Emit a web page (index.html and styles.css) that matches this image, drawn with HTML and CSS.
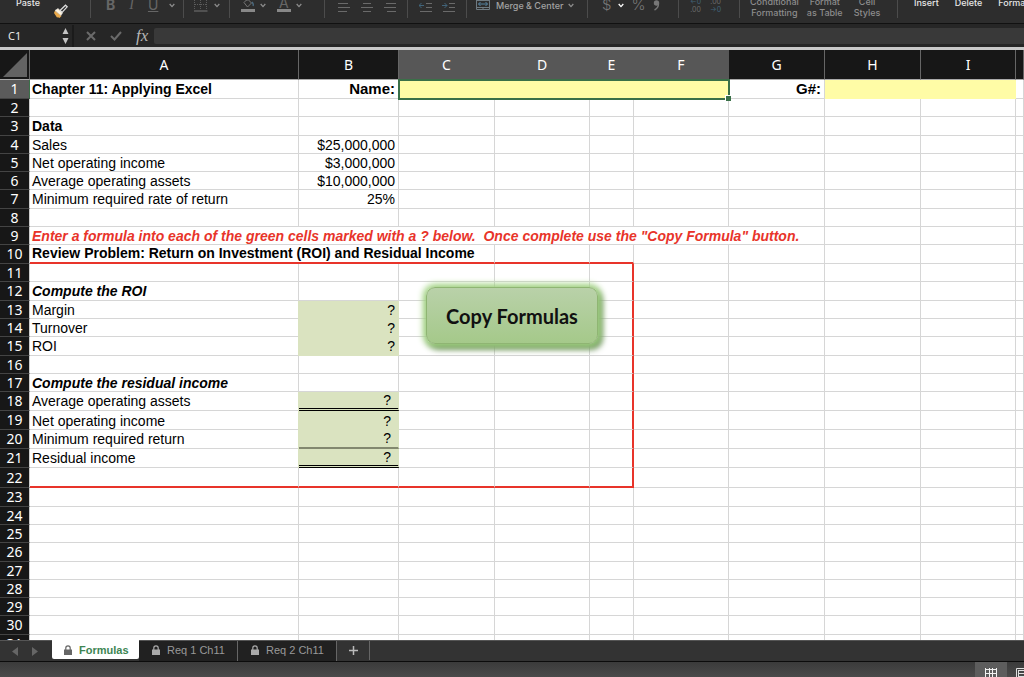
FILE: index.html
```html
<!DOCTYPE html>
<html lang="en">
<head>
<meta charset="utf-8">
<title>Chapter 11: Applying Excel</title>
<link rel="stylesheet" href="styles.css">
</head>
<body>
<svg class="defs" aria-hidden="true">
  <symbol id="chev" viewBox="0 0 6 5"><path d="M.7 1 3 3.6 5.3 1" fill="none" stroke="currentColor" stroke-width="1.3"/></symbol>
  <symbol id="lock" viewBox="0 0 8 10"><path d="M0 4.5h8V10H0z" fill="currentColor"/><path d="M1.8 5V3a2.2 2.2 0 0 1 4.4 0v2" fill="none" stroke="currentColor" stroke-width="1.2"/></symbol>
</svg>

<header class="ribbon">
  <div class="group g-paste">
    <button class="label one bright">Paste</button>
    <button class="ico" aria-label="Format painter"><svg width="16" height="16" viewBox="0 0 16 16"><path d="M2 8.500 8.500 14 6.500 16 5 15.200 4 15.500 1 11z" fill="#e9a94b"/><path d="M2 8.500 5 6.500 9.500 10.800 8 13.500z" fill="#fff3dc" stroke="#ddd" stroke-width=".6"/><path d="M7 8.500 12.500 3.200 14.200 4.800 9 10.300z" fill="none" stroke="#ddd" stroke-width="1.200"/></svg></button>
  </div>
  <div class="group g-style">
    <button class="glyph b">B</button>
    <button class="glyph i">I</button>
    <button class="glyph u">U</button>
    <button class="drop" aria-label="Underline options"><svg width="6" height="5"><use href="#chev"/></svg></button>
  </div>
  <div class="group g-border">
    <button class="ico" aria-label="Borders"><svg width="14" height="14" viewBox="0 0 14 14" fill="none" stroke="#5c5c5c"><path d="M.5 0v12M6.500 0v12M12.500 0v12M1 6.500h12" stroke-dasharray="1 1"/><path d="M0 13h13.500" stroke="#777"/></svg></button>
    <button class="drop" aria-label="Border options"><svg width="6" height="5"><use href="#chev"/></svg></button>
  </div>
  <div class="group g-fill">
    <button class="ico" aria-label="Fill color"><svg width="14" height="14" viewBox="0 0 14 14"><path d="M3 4.500 6.500 1 10.500 5 6.500 9z" fill="none" stroke="#777"/><path d="M6 0v3" stroke="#777"/><path d="M11 4q2 2.500 1 4" fill="none" stroke="#4b6b80" stroke-width="1.300"/><path d="M0 11h14v3H0z" fill="#888"/></svg></button>
    <button class="drop" aria-label="Fill options"><svg width="6" height="5"><use href="#chev"/></svg></button>
    <button class="glyph fontcolor">A</button>
    <button class="drop" aria-label="Font color options"><svg width="6" height="5"><use href="#chev"/></svg></button>
  </div>
  <div class="group g-align">
    <button class="ico" aria-label="Align left"><svg width="12" height="11" viewBox="0 0 12 11" stroke="#6a6a6a"><path d="M0 2.500h10M0 6.500h12M0 10.500h9"/></svg></button>
    <button class="ico" aria-label="Align center"><svg width="12" height="11" viewBox="0 0 12 11" stroke="#6a6a6a"><path d="M2 2.500h8M0 6.500h12M2 10.500h8"/></svg></button>
    <button class="ico" aria-label="Align right"><svg width="12" height="11" viewBox="0 0 12 11" stroke="#6a6a6a"><path d="M2 2.500h10M0 6.500h12M3 10.500h9"/></svg></button>
  </div>
  <div class="group g-indent">
    <button class="ico" aria-label="Decrease indent"><svg width="13" height="11" viewBox="0 0 13 11" fill="none" stroke="#6a6a6a"><path d="M7 2.500h6M7 6.500h6M1 10.500h12"/><path d="M0 4.500h5M2.500 2 0 4.500 2.500 7" stroke="#41647a"/></svg></button>
    <button class="ico" aria-label="Increase indent"><svg width="13" height="11" viewBox="0 0 13 11" fill="none" stroke="#6a6a6a"><path d="M7 2.500h6M7 6.500h6M1 10.500h12"/><path d="M0 4.500h5M2.500 2 5 4.500 2.500 7" stroke="#41647a"/></svg></button>
  </div>
  <div class="group g-merge">
    <button class="merge"><svg width="14" height="14" viewBox="0 0 14 14" fill="none" stroke="#6f7b82"><path d="M.5 0v11.500h13V0M.5 2.500h13M.5 9.500h13M7 0v2M7 10v2"/><path d="M2.500 6h9M4.500 4l-2 2 2 2M9.500 4l2 2-2 2" stroke="#5585a3"/></svg>Merge &amp; Center</button>
    <button class="drop" aria-label="Merge options"><svg width="6" height="5"><use href="#chev"/></svg></button>
  </div>
  <div class="group g-number">
    <button class="glyph thin">$</button>
    <button class="drop white" aria-label="Currency options"><svg width="6" height="5"><use href="#chev"/></svg></button>
    <button class="glyph thin">%</button>
    <button class="ico" aria-label="Comma style"><svg width="7" height="11" viewBox="0 0 7 11"><circle cx="3.500" cy="3" r="2.700" fill="#777"/><path d="M5.500 3.500Q5.500 8 1.500 10" fill="none" stroke="#777" stroke-width="1.400"/></svg></button>
  </div>
  <div class="group g-decimal">
    <button class="dec"><span class="arrow">←0</span><span>.00</span></button>
    <button class="dec"><span>.00</span><span class="arrow">→0</span></button>
  </div>
  <div class="group g-cells">
    <button class="label">Conditional<br>Formatting</button>
    <button class="label">Format<br>as Table</button>
    <button class="label">Cell<br>Styles</button>
  </div>
  <div class="group g-edit">
    <button class="label one bright">Insert</button>
    <button class="label one bright">Delete</button>
    <button class="label one bright">Format</button>
  </div>
</header>

<section class="formula-bar">
  <div class="name-box">
    <input class="name" aria-label="Name box" value="C1">
    <svg width="7" height="16" viewBox="0 0 7 16" fill="#c4c4c4"><path d="M.5 6 3.500 0l3 6zM.5 10h6L3.500 16z"/></svg>
  </div>
  <button class="fx-btn" aria-label="Cancel"><svg width="10" height="10" viewBox="0 0 10 10" stroke="#6a6a6a" stroke-width="2"><path d="M1 1l8 8M9 1 1 9"/></svg></button>
  <button class="fx-btn" aria-label="Enter"><svg width="12" height="10" viewBox="0 0 12 10" fill="none" stroke="#6a6a6a" stroke-width="2"><path d="M1 5l3.500 3.500L11 1"/></svg></button>
  <button class="fx">fx</button>
  <input class="formula" aria-label="Formula">
</section>

<main class="sheet">
<table>
<colgroup><col class="c-n"><col class="c-a"><col class="c-b"><col class="c-w"><col class="c-m"><col class="c-e"><col class="c-m"><col class="c-w"><col class="c-w"><col class="c-m"><col></colgroup>
<thead><tr><th class="corner"><svg width="24" height="24" viewBox="0 0 24 24"><path d="M24 0v24H0z" fill="#636363"/></svg></th><th>A</th><th>B</th><th class="sel">C</th><th class="sel">D</th><th class="sel">E</th><th class="sel last">F</th><th>G</th><th>H</th><th>I</th><th></th></tr></thead>
<tbody>
<tr class="h19"><th class="sel">1</th><td class="bold">Chapter 11: Applying Excel</td><td class="bold big num">Name:</td><td class="active" colspan="4"></td><td class="bold big num">G#:</td><td class="yellow"></td><td class="yellow"></td><td></td></tr>
<tr><th>2</th><td></td><td></td><td></td><td></td><td></td><td></td><td></td><td></td><td></td><td></td></tr>
<tr class="h19"><th>3</th><td class="bold">Data</td><td></td><td></td><td></td><td></td><td></td><td></td><td></td><td></td><td></td></tr>
<tr><th>4</th><td>Sales</td><td class="num">$25,000,000</td><td></td><td></td><td></td><td></td><td></td><td></td><td></td><td></td></tr>
<tr><th>5</th><td>Net operating income</td><td class="num">$3,000,000</td><td></td><td></td><td></td><td></td><td></td><td></td><td></td><td></td></tr>
<tr><th>6</th><td>Average operating assets</td><td class="num">$10,000,000</td><td></td><td></td><td></td><td></td><td></td><td></td><td></td><td></td></tr>
<tr class="h19"><th>7</th><td>Minimum required rate of return</td><td class="num">25%</td><td></td><td></td><td></td><td></td><td></td><td></td><td></td><td></td></tr>
<tr><th>8</th><td></td><td></td><td></td><td></td><td></td><td></td><td></td><td></td><td></td><td></td></tr>
<tr><th>9</th><td class="bold italic red" colspan="7">Enter a formula into each of the green cells marked with a ? below.&nbsp; Once complete use the "Copy Formula" button.</td><td></td><td></td><td></td></tr>
<tr class="h19"><th>10</th><td class="bold box-top" colspan="3">Review Problem: Return on Investment (ROI) and Residual Income</td><td class="box-top"></td><td class="box-top"></td><td></td><td></td><td></td><td></td><td></td></tr>
<tr><th>11</th><td></td><td></td><td></td><td></td><td class="box-right"></td><td></td><td></td><td></td><td></td><td></td></tr>
<tr class="h19"><th>12</th><td class="bold italic">Compute the ROI</td><td></td><td></td><td></td><td class="box-right"></td><td></td><td></td><td></td><td></td><td></td></tr>
<tr><th>13</th><td>Margin</td><td class="num green">?</td><td></td><td></td><td class="box-right"></td><td></td><td></td><td></td><td></td><td></td></tr>
<tr><th>14</th><td>Turnover</td><td class="num green">?</td><td></td><td></td><td class="box-right"></td><td></td><td></td><td></td><td></td><td></td></tr>
<tr class="h19"><th>15</th><td>ROI</td><td class="num green">?</td><td></td><td></td><td class="box-right"></td><td></td><td></td><td></td><td></td><td></td></tr>
<tr><th>16</th><td></td><td></td><td></td><td></td><td class="box-right"></td><td></td><td></td><td></td><td></td><td></td></tr>
<tr><th>17</th><td class="bold italic">Compute the residual income</td><td></td><td></td><td></td><td class="box-right"></td><td></td><td></td><td></td><td></td><td></td></tr>
<tr class="h19"><th>18</th><td>Average operating assets</td><td class="num green acct double">?</td><td></td><td></td><td class="box-right"></td><td></td><td></td><td></td><td></td><td></td></tr>
<tr class="h19 low"><th>19</th><td>Net operating income</td><td class="num green acct">?</td><td></td><td></td><td class="box-right"></td><td></td><td></td><td></td><td></td><td></td></tr>
<tr class="h19"><th>20</th><td>Minimum required return</td><td class="num green acct single">?</td><td></td><td></td><td class="box-right"></td><td></td><td></td><td></td><td></td><td></td></tr>
<tr class="h19"><th>21</th><td>Residual income</td><td class="num green acct double">?</td><td></td><td></td><td class="box-right"></td><td></td><td></td><td></td><td></td><td></td></tr>
<tr class="h20"><th>22</th><td class="box-bottom"></td><td class="box-bottom"></td><td class="box-bottom"></td><td class="box-bottom"></td><td class="box-bottom box-right"></td><td></td><td></td><td></td><td></td><td></td></tr>
<tr class="h19"><th>23</th><td></td><td></td><td></td><td></td><td></td><td></td><td></td><td></td><td></td><td></td></tr>
<tr><th>24</th><td></td><td></td><td></td><td></td><td></td><td></td><td></td><td></td><td></td><td></td></tr>
<tr><th>25</th><td></td><td></td><td></td><td></td><td></td><td></td><td></td><td></td><td></td><td></td></tr>
<tr class="h19"><th>26</th><td></td><td></td><td></td><td></td><td></td><td></td><td></td><td></td><td></td><td></td></tr>
<tr><th>27</th><td></td><td></td><td></td><td></td><td></td><td></td><td></td><td></td><td></td><td></td></tr>
<tr><th>28</th><td></td><td></td><td></td><td></td><td></td><td></td><td></td><td></td><td></td><td></td></tr>
<tr><th>29</th><td></td><td></td><td></td><td></td><td></td><td></td><td></td><td></td><td></td><td></td></tr>
<tr class="h19"><th>30</th><td></td><td></td><td></td><td></td><td></td><td></td><td></td><td></td><td></td><td></td></tr>
<tr><th>31</th><td></td><td></td><td></td><td></td><td></td><td></td><td></td><td></td><td></td><td></td></tr>
</tbody>
</table>
<button class="copy">Copy Formulas</button>
</main>

<nav class="tabs">
  <div class="arrows">
    <button aria-label="Previous sheet"><svg width="6" height="9" viewBox="0 0 6 9"><path d="M6 0v9L0 4.500z" fill="#666"/></svg></button>
    <button aria-label="Next sheet"><svg width="6" height="9" viewBox="0 0 6 9"><path d="M0 0v9l6-4.500z" fill="#666"/></svg></button>
  </div>
  <button class="tab on"><svg width="8" height="10"><use href="#lock"/></svg>Formulas</button>
  <button class="tab"><svg width="8" height="10"><use href="#lock"/></svg>Req 1 Ch11</button>
  <button class="tab"><svg width="8" height="10"><use href="#lock"/></svg>Req 2 Ch11</button>
  <button class="add" aria-label="Add sheet"><svg width="9" height="9" viewBox="0 0 9 9" stroke="#bbb" stroke-width="1.500"><path d="M4.500 0v9M0 4.500h9"/></svg></button>
</nav>
<footer class="status">
  <button class="view on" aria-label="Normal view"><svg width="12" height="12" viewBox="0 0 12 12" fill="none" stroke="#f2f2f2"><path d="M.5 0v12M4.500 0v12M7.500 0v12M11.500 0v12M0 1.500h12M0 5.500h12M0 9.500h12"/></svg></button>
  <button class="view" aria-label="Page layout view"><svg width="12" height="12" viewBox="0 0 12 12" fill="none" stroke="#e0e0e0"><path d="M.5 .5h11v11H.5zM3 2.500h7M3 5.500h5M3 8.500h7M2.500 2v7"/></svg></button>
</footer>
</body>
</html>
```
FILE: styles.css
```css
* { box-sizing: border-box; }
body {
  margin: 0;
  height: 100vh;
  display: flex;
  flex-direction: column;
  overflow: hidden;
  background: #2d2d2d;
  font-family: Inter, "Liberation Sans", sans-serif;
}
.defs { position: absolute; width: 0; height: 0; }
button, input {
  font: inherit;
  color: inherit;
  background: none;
  border: 0;
  padding: 0;
  margin: 0;
}
svg { display: block; }

/* Ribbon */
.ribbon {
  flex: none;
  display: flex;
  height: 24px;
  overflow: hidden;
  background: #2d2d2d;
  border-bottom: 1px solid #111;
  color: #8c8c8c;
  font-size: 10px;
}
.group {
  flex: none;
  display: flex;
  align-items: flex-end;
  height: 18px;
  border-right: 1px solid #4c4c4c;
}
.group .ico, .group .drop, .group .glyph { flex: none; }
.drop { padding-bottom: 10px; }
.drop.white { color: #fff; }
.glyph { font-size: 14px; line-height: 16px; padding-bottom: 5px; color: #666; }
.b { font-weight: 700; }
.i { font-family: "Liberation Serif", serif; font-style: italic; }
.u { text-decoration: underline; }
.thin { font-size: 15px; font-weight: 300; color: #777; }
.fontcolor { line-height: 12px; padding: 0 3px; border-bottom: 3px solid #888; }
.label { text-align: center; line-height: 11px; font-size: 9px; font-weight: 500; white-space: nowrap; }
.label.one { padding-bottom: 10px; }
.bright { color: #e6e6e6; }
.g-paste { width: 91px; padding-left: 16px; gap: 13px; }
.g-style { width: 93px; padding-left: 15px; gap: 14px; }
.g-style .drop { margin-left: -3px; }
.g-border { width: 46px; padding-left: 10px; gap: 6px; }
.g-border .ico, .g-fill .ico { padding-bottom: 6px; }
.g-fill { width: 95px; padding-left: 11px; gap: 11px; }
.g-fill .drop { margin-left: -6px; }
.g-fill .fontcolor { margin-bottom: 6px; padding: 0 2px; }
.g-align { width: 83px; padding-left: 13px; gap: 11px; }
.g-align .ico, .g-indent .ico { padding-bottom: 6px; }
.g-indent { width: 59px; padding-left: 11px; gap: 10px; }
.g-merge { width: 121px; padding-left: 9px; gap: 5px; }
.merge { display: flex; align-items: flex-end; gap: 6px; font-size: 9px; line-height: 12px; padding-bottom: 6px; font-weight: 500; color: #a2a2a2; white-space: nowrap; }
.g-number { width: 91px; padding-left: 14px; gap: 7px; }
.g-number .ico { padding-bottom: 7px; }
.g-decimal { width: 61px; padding-left: 11px; gap: 9px; }
.dec { display: flex; flex-direction: column; font-size: 7px; line-height: 8px; padding-bottom: 4px; color: #6a6a6a; }
.arrow { color: #41647a; }
.g-cells { width: 158px; padding-left: 10px; gap: 8px; }
.g-cells .label:last-child { margin-left: 3px; }
.g-edit { border: 0; padding-left: 16px; gap: 16px; }

/* Formula bar */
.formula-bar {
  flex: none;
  display: flex;
  align-items: center;
  height: 26px;
  padding-top: 1px;
  background: #262626;
  border-bottom: 3px solid #c9c9c9;
  color: #e8e8e8;
}
.name-box {
  display: flex;
  align-items: center;
  width: 74px;
  height: 22px;
  padding: 0 3px 0 8px;
  border-right: 2px solid #1b1b1b;
}
.name { flex: 1; min-width: 0; font: 11px/16px "Noto Sans", sans-serif; }
.fx-btn { width: 10px; margin-left: 12px; }
.fx-btn + .fx-btn { width: 12px; margin-left: 14px; }
.fx { margin: 0 6px 0 14px; font: italic 17px/18px "Liberation Serif", serif; color: #b5b5b5; }
.formula { flex: 1; height: 16px; border-radius: 2px 0 0 2px; background: #393939; }

/* Sheet */
.sheet { flex: 1; min-height: 0; position: relative; overflow: hidden; background: #fff; }
table {
  width: 100%;
  table-layout: fixed;
  border-collapse: separate;
  border-spacing: 0;
  color: #000;
  font: 14px/16px "Liberation Sans", Arial, sans-serif;
}
.c-n { width: 30px; }
.c-a { width: 269px; }
.c-b { width: 100px; }
.c-w { width: 96px; }
.c-m { width: 95px; }
.c-e { width: 44px; }
th {
  padding: 0;
  background: #171717;
  border-right: 1px solid #666;
  color: #fff;
  font: 14px/16px "Noto Sans", sans-serif;
}
thead th { height: 30px; border-bottom: 1px solid #aaa; }
thead .sel { background: #575757; border-right-color: #575757; border-bottom-color: #3a7048; }
.corner svg { margin-left: 3px; }
tbody th { border-bottom: 1px solid #444; border-right-color: #ccc; }
tbody .sel { background: #5b5b5b; border-right-color: #3a7048; }
tbody tr { height: 18px; }
tbody .h19 { height: 19px; }
tbody .h20 { height: 20px; }
td {
  padding: 1px 3px 0 2px;
  border-right: 1px solid #d6d6d6;
  border-bottom: 1px solid #d6d6d6;
  line-height: 16px;
  vertical-align: top;
  white-space: nowrap;
}
.low td { padding-top: 2px; }
.num { text-align: right; }
.bold { font-weight: 700; }
.italic { font-style: italic; }
.big { font-size: 15px; }
.red { color: #e8342a; }
.yellow { background: #fffca6; border-color: #fffca6; }
.active {
  position: relative;
  background: #fffca6;
  border: 1px solid #fff;
  outline: 2px solid #3a7048;
  outline-offset: -1px;
}
.active::after {
  content: "";
  position: absolute;
  right: -3px;
  bottom: -3px;
  width: 5px;
  height: 5px;
  background: #3a7048;
  border: solid #fff;
  border-width: 1px 0 0 1px;
}
.green { background: #dae3c0; border-color: #dae3c0; box-shadow: -1px 0 #dae3c0; }
.acct { padding-right: 7px; }
.single, .double, .box-top { line-height: 15px; }
.single { border-bottom: 2px solid #82886f; }
.double { border-bottom: 3px double #000; }
.box-top { border-bottom: 2px solid #e8342a; }
.box-right { border-right: 2px solid #e8342a; }
.box-bottom { border-bottom: 2px solid #e8342a; }
.copy {
  position: absolute;
  left: 426px;
  top: 237px;
  width: 172px;
  height: 57px;
  border: 1px solid #8fb573;
  border-radius: 9px;
  background: linear-gradient(#b9d1a9, #a5c98a);
  box-shadow: 0 0 6px 3px #a4d585, 3px 4px 6px 1px #567a45;
  color: #111;
  font: 700 20px/24px Lato, sans-serif;
}

/* Sheet tabs */
.tabs {
  flex: none;
  display: flex;
  height: 22px;
  background: #333;
  border-top: 1px solid #555;
  border-bottom: 1px solid #0c0c0c;
  color: #999;
  font: 11px/14px "Liberation Sans", Arial, sans-serif;
}
.arrows { display: flex; align-items: center; gap: 14px; width: 52px; padding-left: 12px; }
.tab {
  display: flex;
  align-items: center;
  gap: 7px;
  min-width: 99px;
  height: 20px;
  padding: 0 12px 2px 13px;
  background: #212121;
  border-right: 1px solid #666;
  white-space: nowrap;
}
.tab svg { color: #aaa; }
.tab.on {
  min-width: 87px;
  height: 19px;
  margin-top: -1px;
  padding: 0 10px 0 12px;
  background: #fff;
  border: 0;
  border-radius: 0 0 2px 2px;
  color: #3d8552;
  font-weight: 700;
}
.tab.on svg { color: #666; }
.add { display: flex; align-items: center; justify-content: center; width: 33px; height: 19px; border-right: 1px solid #666; }

/* Status bar */
.status {
  flex: none;
  display: flex;
  justify-content: flex-end;
  height: 15px;
  overflow: hidden;
  background: linear-gradient(#3b3b3b, #4a4a4a);
}
.view { flex: none; width: 32px; height: 20px; padding: 3px 0 0 10px; }
.view.on { background: #5d5d5d; }
.view:last-child { width: 17px; padding-left: 9px; }
```
